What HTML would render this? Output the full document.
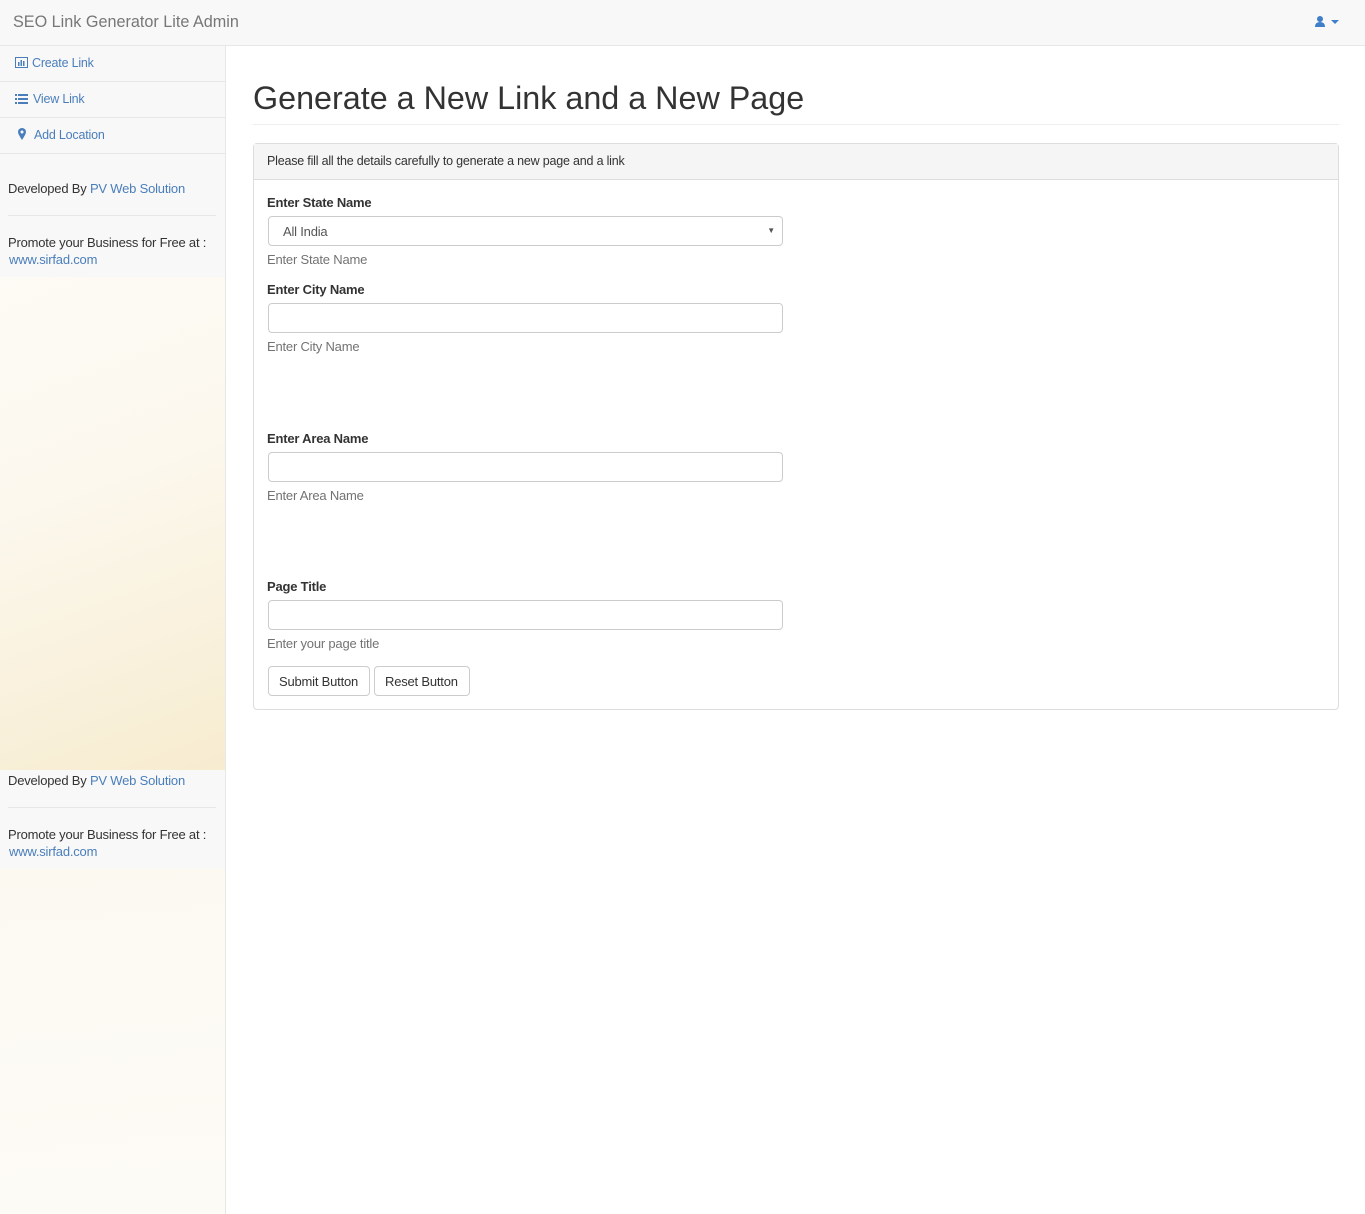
<!DOCTYPE html>
<html><head><meta charset="utf-8"><style>
*{box-sizing:border-box;margin:0;padding:0}
body{width:1365px;height:1214px;position:relative;font-family:"Liberation Sans",sans-serif;font-size:13px;color:#333;background:#fff;overflow:hidden;letter-spacing:-0.2px}
.a{position:absolute;white-space:nowrap}
a,.lk{color:#4a7ebb;text-decoration:none}
.nav{left:0;top:0;width:1365px;height:46px;background:#f8f8f8;border-bottom:1px solid #e7e7e7}
.side{left:0;top:46px;width:226px;height:1168px;background:#f8f8f8;border-right:1px solid #e7e7e7}
.cream{left:0;width:225px;background:linear-gradient(160deg,#fdfbf5 0%,#fcf8ee 40%,#f7ecd0 100%)}
.cream2{background:linear-gradient(175deg,#fcf9f1 0%,#fdfbf6 100%)}
.item{left:0;width:225px;height:36px;border-bottom:1px solid #e7e7e7;padding:10px 0 0 15px;font-size:12.5px;color:#4a7ebb}
.inp{left:268px;width:515px;height:30px;border:1px solid #ccc;border-radius:4px;background:#fff}
.lbl{left:267px;font-weight:bold;font-size:13px}
.help{left:267px;color:#737373;font-size:13px}
.btn{top:666px;height:30px;border:1px solid #ccc;border-radius:4px;background:#fff;padding:7px 10px 0;font-size:13px}
</style></head><body>
<div class="a nav"></div>
<div class="a" style="left:13px;top:13px;font-size:16.2px;color:#777;letter-spacing:0">SEO Link Generator Lite Admin</div>
<svg class="a" style="left:1314px;top:15px" width="28" height="14" viewBox="0 0 28 14"><circle cx="6" cy="4" r="3" fill="#3f7fc9"/><path d="M1 12 Q1 7 6 7 Q11 7 11 12 Z" fill="#3f7fc9"/><path d="M17 5 L25 5 L21 9 Z" fill="#3f7fc9"/></svg>
<div class="a side"></div>
<div class="a cream" style="top:277px;height:493px"></div>
<div class="a cream cream2" style="top:869px;height:345px"></div>
<div class="a item" style="top:46px"><svg width="13" height="11" viewBox="0 0 13 11" style="vertical-align:-1px;margin-right:4px"><rect x="0.5" y="0.5" width="12" height="10" fill="none" stroke="#4a7ebb"/><rect x="3" y="5" width="1.5" height="4" fill="#4a7ebb"/><rect x="5.5" y="3" width="1.5" height="6" fill="#4a7ebb"/><rect x="8" y="4" width="1.5" height="5" fill="#4a7ebb"/></svg>Create Link</div>
<div class="a item" style="top:82px"><svg width="13" height="11" viewBox="0 0 13 11" style="vertical-align:-1px;margin-right:5px"><rect x="0" y="1" width="2" height="2" fill="#4a7ebb"/><rect x="3" y="1" width="10" height="2" fill="#4a7ebb"/><rect x="0" y="5" width="2" height="2" fill="#4a7ebb"/><rect x="3" y="5" width="10" height="2" fill="#4a7ebb"/><rect x="0" y="9" width="2" height="2" fill="#4a7ebb"/><rect x="3" y="9" width="10" height="2" fill="#4a7ebb"/></svg>View Link</div>
<div class="a item" style="top:118px;padding-left:18px"><svg width="8" height="12" viewBox="0 0 8 12" style="vertical-align:-1px;margin-right:8px"><path d="M4 0 A4 4 0 0 1 8 4 Q8 6 4 12 Q0 6 0 4 A4 4 0 0 1 4 0 Z" fill="#4a7ebb"/><circle cx="4" cy="4" r="1.5" fill="#f8f8f8"/></svg>Add Location</div>
<div class="a" style="left:8px;top:181px">Developed By <span class="lk">PV Web Solution</span></div>
<div class="a" style="left:8px;top:215px;width:208px;border-top:1px solid #e7e7e7"></div>
<div class="a" style="left:8px;top:235px">Promote your Business for Free at :</div>
<div class="a lk" style="left:9px;top:252px">www.sirfad.com</div>
<div class="a" style="left:8px;top:773px">Developed By <span class="lk">PV Web Solution</span></div>
<div class="a" style="left:8px;top:807px;width:208px;border-top:1px solid #e7e7e7"></div>
<div class="a" style="left:8px;top:827px">Promote your Business for Free at :</div>
<div class="a lk" style="left:9px;top:844px">www.sirfad.com</div>
<div class="a" style="left:253px;top:80px;font-size:32.3px;color:#333;letter-spacing:0">Generate a New Link and a New Page</div>
<div class="a" style="left:253px;top:124px;width:1086px;border-top:1px solid #eee"></div>
<div class="a" style="left:253px;top:143px;width:1086px;height:567px;border:1px solid #ddd;border-radius:4px"></div>
<div class="a" style="left:254px;top:144px;width:1084px;height:36px;background:#f5f5f5;border-bottom:1px solid #ddd;padding:10px 0 0 13px;font-size:12.5px">Please fill all the details carefully to generate a new page and a link</div>
<div class="a lbl" style="top:195px">Enter State Name</div>
<div class="a inp" style="top:216px;padding:7px 0 0 14px;color:#555">All India<span style="position:absolute;right:7px;top:9px;font-size:8px">▼</span></div>
<div class="a help" style="top:252px">Enter State Name</div>
<div class="a lbl" style="top:282px">Enter City Name</div>
<div class="a inp" style="top:303px"></div>
<div class="a help" style="top:339px">Enter City Name</div>
<div class="a lbl" style="top:431px">Enter Area Name</div>
<div class="a inp" style="top:452px"></div>
<div class="a help" style="top:488px">Enter Area Name</div>
<div class="a lbl" style="top:579px">Page Title</div>
<div class="a inp" style="top:600px"></div>
<div class="a help" style="top:636px">Enter your page title</div>
<div class="a btn" style="left:268px;width:102px">Submit Button</div>
<div class="a btn" style="left:374px;width:96px">Reset Button</div>
</body></html>
